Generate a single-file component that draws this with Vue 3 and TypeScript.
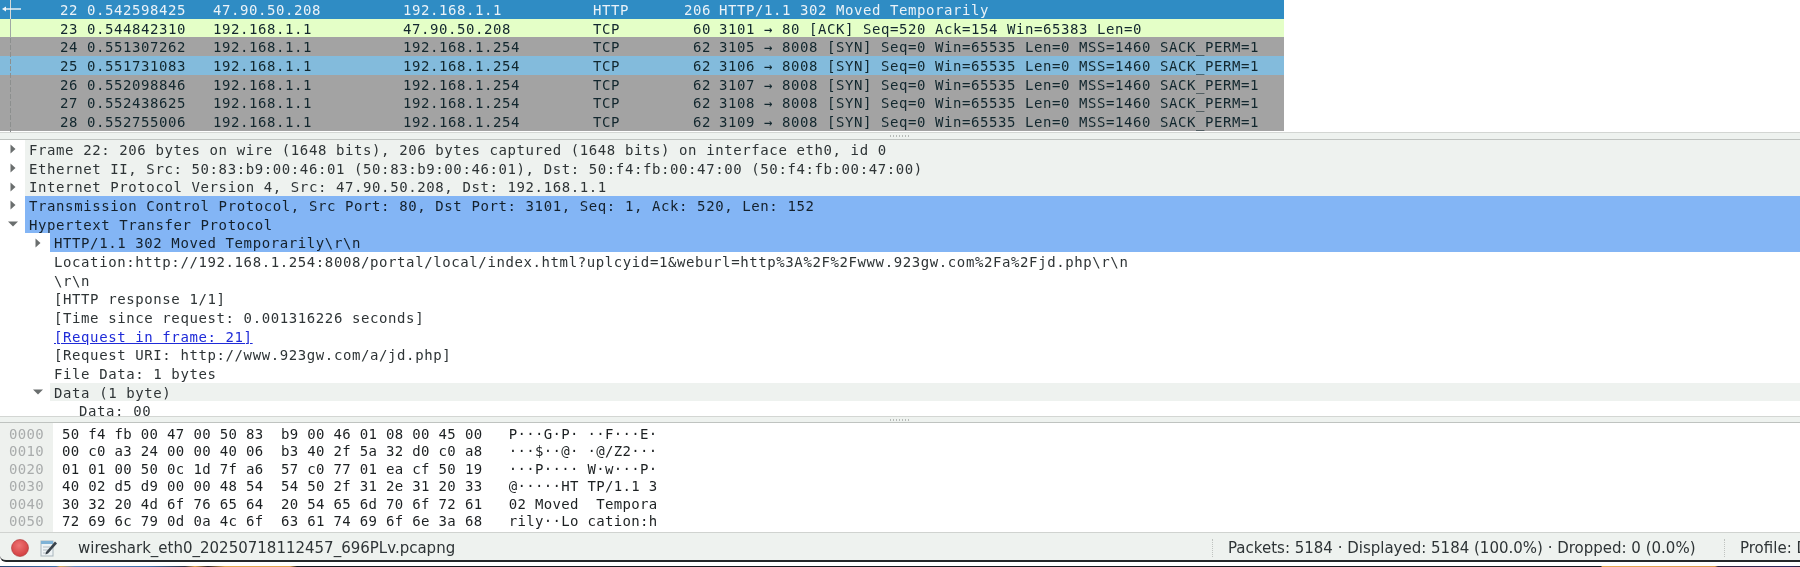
<script setup lang="ts">
interface Packet { no: number; time: string; src: string; dst: string; proto: string; len: number; info: string; kind: string }
const syn = (port: number) => `${port} → 8008 [SYN] Seq=0 Win=65535 Len=0 MSS=1460 SACK_PERM=1`
const packets: Packet[] = [
  { no: 22, time: '0.542598425', src: '47.90.50.208', dst: '192.168.1.1', proto: 'HTTP', len: 206, info: 'HTTP/1.1 302 Moved Temporarily', kind: 'selected' },
  { no: 23, time: '0.544842310', src: '192.168.1.1', dst: '47.90.50.208', proto: 'TCP', len: 60, info: '3101 → 80 [ACK] Seq=520 Ack=154 Win=65383 Len=0', kind: 'green' },
  { no: 24, time: '0.551307262', src: '192.168.1.1', dst: '192.168.1.254', proto: 'TCP', len: 62, info: syn(3105), kind: 'gray' },
  { no: 25, time: '0.551731083', src: '192.168.1.1', dst: '192.168.1.254', proto: 'TCP', len: 62, info: syn(3106), kind: 'blue' },
  { no: 26, time: '0.552098846', src: '192.168.1.1', dst: '192.168.1.254', proto: 'TCP', len: 62, info: syn(3107), kind: 'gray' },
  { no: 27, time: '0.552438625', src: '192.168.1.1', dst: '192.168.1.254', proto: 'TCP', len: 62, info: syn(3108), kind: 'gray' },
  { no: 28, time: '0.552755006', src: '192.168.1.1', dst: '192.168.1.254', proto: 'TCP', len: 62, info: syn(3109), kind: 'gray' }
]
interface Detail { text: string; level: number; arrow: string; tone: string; link?: boolean }
const details: Detail[] = [
  { text: 'Frame 22: 206 bytes on wire (1648 bits), 206 bytes captured (1648 bits) on interface eth0, id 0', level: 0, arrow: 'right', tone: 'top' },
  { text: 'Ethernet II, Src: 50:83:b9:00:46:01 (50:83:b9:00:46:01), Dst: 50:f4:fb:00:47:00 (50:f4:fb:00:47:00)', level: 0, arrow: 'right', tone: 'top' },
  { text: 'Internet Protocol Version 4, Src: 47.90.50.208, Dst: 192.168.1.1', level: 0, arrow: 'right', tone: 'top' },
  { text: 'Transmission Control Protocol, Src Port: 80, Dst Port: 3101, Seq: 1, Ack: 520, Len: 152', level: 0, arrow: 'right', tone: 'hl' },
  { text: 'Hypertext Transfer Protocol', level: 0, arrow: 'down', tone: 'hl' },
  { text: 'HTTP/1.1 302 Moved Temporarily\\r\\n', level: 1, arrow: 'right', tone: 'hl' },
  { text: 'Location:http://192.168.1.254:8008/portal/local/index.html?uplcyid=1&weburl=http%3A%2F%2Fwww.923gw.com%2Fa%2Fjd.php\\r\\n', level: 1, arrow: '', tone: '' },
  { text: '\\r\\n', level: 1, arrow: '', tone: '' },
  { text: '[HTTP response 1/1]', level: 1, arrow: '', tone: '' },
  { text: '[Time since request: 0.001316226 seconds]', level: 1, arrow: '', tone: '' },
  { text: '[Request in frame: 21]', level: 1, arrow: '', tone: '', link: true },
  { text: '[Request URI: http://www.923gw.com/a/jd.php]', level: 1, arrow: '', tone: '' },
  { text: 'File Data: 1 bytes', level: 1, arrow: '', tone: '' },
  { text: 'Data (1 byte)', level: 1, arrow: 'down', tone: 'top' },
  { text: 'Data: 00', level: 2, arrow: '', tone: '' }
]
const hex = [
  ['0000', '50 f4 fb 00 47 00 50 83', 'b9 00 46 01 08 00 45 00', 'P···G·P·', '··F···E·'],
  ['0010', '00 c0 a3 24 00 00 40 06', 'b3 40 2f 5a 32 d0 c0 a8', '···$··@·', '·@/Z2···'],
  ['0020', '01 01 00 50 0c 1d 7f a6', '57 c0 77 01 ea cf 50 19', '···P····', 'W·w···P·'],
  ['0030', '40 02 d5 d9 00 00 48 54', '54 50 2f 31 2e 31 20 33', '@·····HT', 'TP/1.1 3'],
  ['0040', '30 32 20 4d 6f 76 65 64', '20 54 65 6d 70 6f 72 61', '02 Moved', ' Tempora'],
  ['0050', '72 69 6c 79 0d 0a 4c 6f', '63 61 74 69 6f 6e 3a 68', 'rily··Lo', 'cation:h']
]
</script>

<template>
  <div class="win">
    <section class="list">
      <div class="table">
        <div v-for="p in packets" :key="p.no" class="pkt" :class="p.kind">
          <span class="c-no">{{ p.no }}</span>
          <span class="c-time">{{ p.time }}</span>
          <span class="c-src">{{ p.src }}</span>
          <span class="c-dst">{{ p.dst }}</span>
          <span class="c-proto">{{ p.proto }}</span>
          <span class="c-len">{{ p.len }}</span>
          <span class="c-info">{{ p.info }}</span>
        </div>
      </div>
      <svg class="rel" width="24" height="132" viewBox="0 0 24 132">
        <path d="M10.5 0V19" stroke="#d6dad8" stroke-width="1" fill="none" />
        <path d="M10.5 19V38" stroke="#9fa8a4" stroke-width="1" fill="none" />
        <path d="M10.5 38V132" stroke="#8c8f8e" stroke-width="1" stroke-dasharray="5 2" fill="none" />
        <path d="M5 9H21" stroke="#f2f6f8" stroke-width="1.4" fill="none" />
        <path d="M2 9L6 6.5V11.5Z" fill="#f2f6f8" />
      </svg>
    </section>
    <div class="split"><i></i></div>
    <section class="tree">
      <div v-for="d in details" :key="d.text" class="node" :class="'lv' + d.level">
        <span class="twist">
          <svg v-if="d.arrow === 'right'" width="8" height="10" viewBox="0 0 8 10"><path d="M1.5 0.5L6.5 5L1.5 9.5Z" fill="#6a6e6e" /></svg>
          <svg v-else-if="d.arrow === 'down'" width="10" height="8" viewBox="0 0 10 8"><path d="M0 1.5H10L5 6.5Z" fill="#6a6e6e" /></svg>
        </span>
        <span class="label" :class="d.tone">
          <a v-if="d.link" class="lnk">{{ d.text }}</a>
          <template v-else>{{ d.text }}</template>
        </span>
      </div>
    </section>
    <div class="split lower"><i></i></div>
    <section class="bytes">
      <div class="gutter">
        <div v-for="h in hex" :key="h[0]" class="hrow">{{ h[0] }}</div>
      </div>
      <div class="hexwrap">
        <div v-for="h in hex" :key="h[0]" class="hrow">
          <span class="grp">{{ h[1] }}</span><span class="grp g2">{{ h[2] }}</span><span class="grp g3">{{ h[3] }}</span><span class="grp g4">{{ h[4] }}</span>
        </div>
      </div>
    </section>
    <footer class="status">
      <svg class="rec" width="20" height="20" viewBox="0 0 20 20">
        <defs>
          <radialGradient id="r" cx="45%" cy="35%" r="70%"><stop offset="0" stop-color="#ee7474" /><stop offset="1" stop-color="#d03a3c" /></radialGradient>
        </defs>
        <circle cx="10" cy="10" r="8.5" fill="url(#r)" stroke="#a83537" stroke-width="0.6" />
      </svg>
      <svg class="note" width="18" height="20" viewBox="0 0 18 20">
        <rect x="1" y="3" width="12" height="15" fill="#eef3f5" stroke="#a9b6bd" />
        <rect x="1" y="3" width="12" height="3" fill="#7fb2d6" />
        <path d="M3 9H10M3 12H8M3 15H7" stroke="#b3bcc2" fill="none" />
        <path d="M6 14L15 3.5L17 5.5L8 15.5L5.5 16.5Z" fill="#39424a" />
      </svg>
      <span class="file">wireshark_eth0_20250718112457_696PLv.pcapng</span>
      <span class="stat">Packets: 5184 · Displayed: 5184 (100.0%) · Dropped: 0 (0.0%)</span>
      <span class="prof">Profile: Default</span>
    </footer>
    <div class="desk"><div class="strip"></div></div>
  </div>
</template>

<style>
html, body { margin: 0; background: #fff; overflow: hidden; }
</style>

<style scoped>
.win {
  width: 1800px;
  height: 567px;
  overflow: hidden;
  display: flex;
  flex-direction: column;
  font-family: "DejaVu Sans Mono", monospace;
  font-size: 14px;
  letter-spacing: 0.6px;
  color: #2e3436;
  background: #fff;
  filter: blur(0.35px);
}
.list { position: relative; height: 132px; flex: none; letter-spacing: 0.57px; }
.table { width: 1284px; }
.pkt { display: flex; height: 18.67px; line-height: 20px; white-space: pre; }
.pkt.selected { background: #2f8cc4; color: #eaf2f8; }
.pkt.green { background: #e4ffc7; color: #12272e; }
.pkt.gray { background: #a3a3a3; color: #12272e; }
.pkt.blue { background: #83bbdc; color: #12272e; }
.pkt span { display: block; flex: none; }
.c-no { width: 78px; text-align: right; }
.c-time { margin-left: 9px; width: 126px; }
.c-src { width: 190px; }
.c-dst { width: 190px; }
.c-proto { width: 72px; }
.c-len { width: 46px; text-align: right; }
.c-info { margin-left: 8px; }
.rel { position: absolute; left: 0; top: 0; }
.split { flex: none; height: 8px; box-sizing: border-box; background: #eef2ef; border-top: 1.5px solid #d3d6d3; border-bottom: 1.5px solid #bfc3c0; display: flex; justify-content: center; align-items: center; }
.split i { width: 20px; height: 2px; background: repeating-linear-gradient(90deg, #b6bab7 0 1px, transparent 1px 3px); }
.split.lower { height: 7px; }
.tree { height: 276px; flex: none; overflow: hidden; }
.node { display: flex; height: 18.67px; line-height: 20px; white-space: pre; position: relative; }
.twist { flex: none; display: flex; align-items: center; justify-content: center; width: 25px; }
.label { flex: 1; padding-left: 4px; }
.lv1 .twist { width: 50px; padding-left: 25px; box-sizing: border-box; }
.lv2 .twist { width: 75px; }
.label.hl { background: #83b5f5; color: #14202b; }
.label.top { background: #eef2ef; }
.lnk { color: #1f2bd8; text-decoration: underline; }
.bytes { flex: none; height: 109px; display: flex; color: #1c2022; letter-spacing: 0.33px; }
.gutter { width: 53px; background: #eef1ee; color: #a9acac; padding-left: 9px; box-sizing: border-box; flex: none; padding-top: 1.5px; }
.hexwrap { padding-left: 9px; padding-top: 1.5px; }
.hrow { height: 17.53px; line-height: 19.5px; white-space: pre; }
.grp { display: inline-block; }
.g2 { margin-left: 17.5px; }
.g3 { margin-left: 26.3px; }
.g4 { margin-left: 8.7px; }
.status {
  flex: none;
  height: 30px;
  box-sizing: border-box;
  background: #eef2ef;
  border-top: 1px solid #d0d3d0;
  border-bottom: 2px solid #25282a;
  border-bottom-left-radius: 6px;
  padding-top: 3px;
  display: flex;
  align-items: center;
  font-family: "DejaVu Sans", sans-serif;
  font-size: 15px;
  letter-spacing: 0;
  color: #2e3436;
  white-space: pre;
}
.rec { margin-left: 10px; flex: none; }
.note { margin-left: 10px; flex: none; }
.file { margin-left: 20px; width: 1134px; flex: none; }
.stat { padding-left: 15px; border-left: 1px dotted #bfc3c0; width: 512px; flex: none; box-sizing: border-box; }
.prof { padding-left: 15px; border-left: 1px dotted #bfc3c0; flex: none; }
.desk { flex: 1; padding-top: 3.5px; box-sizing: border-box; display: flex; background: #fff; }
.strip {
  flex: 1;
  background: linear-gradient(90deg, #2a4a78 0, #3a6ea8 56px, #d9a24e 60px, #5b86c0 75px, #3a6ea8 150px, #2b3040 185px, #e0a24c 195px, #2a2024 208px, #e3a84e 225px, #e0a24c 290px, #14181c 297px, #14181c 1601px, #e8a850 1602px, #d9984a 1715px, #33233a 1718px, #2a2a60 1790px, #33233a 1800px);
}
</style>
